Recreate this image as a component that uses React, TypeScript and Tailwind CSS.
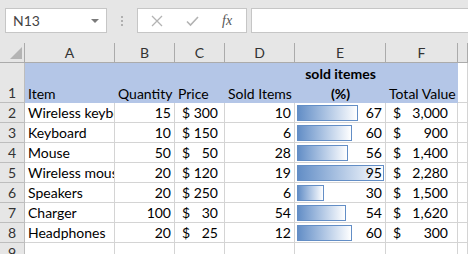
import React from 'react';

type Row = {
    item: string;
    qty: number;
    price: number;
    sold: number;
    pct: number;
    bar: number;
    total: string;
};

const rows: Row[] = [
    { item: 'Wireless keyboard', qty: 15, price: 300, sold: 10, pct: 67, bar: 61, total: '3,000' },
    { item: 'Keyboard', qty: 10, price: 150, sold: 6, pct: 60, bar: 55, total: '900' },
    { item: 'Mouse', qty: 50, price: 50, sold: 28, pct: 56, bar: 51, total: '1,400' },
    { item: 'Wireless mouse', qty: 20, price: 120, sold: 19, pct: 95, bar: 87, total: '2,280' },
    { item: 'Speakers', qty: 20, price: 250, sold: 6, pct: 30, bar: 27, total: '1,500' },
    { item: 'Charger', qty: 100, price: 30, sold: 54, pct: 54, bar: 49, total: '1,620' },
    { item: 'Headphones', qty: 20, price: 25, sold: 12, pct: 60, bar: 55, total: '300' },
];

const cols = ['A', 'B', 'C', 'D', 'E', 'F', ''];

const cell = 'h-5 border-r border-b border-[#d4d4d4] bg-white flex items-end pb-[2px] whitespace-nowrap overflow-hidden';
const rowHead = 'h-5 border-r border-b border-[#bdbdbd] bg-[#e6e6e6] flex items-end justify-center pb-[2px] text-[#333]';
const blue = 'h-10 bg-[#b4c6e7] flex items-end pb-[2px] pl-[3px] whitespace-nowrap overflow-hidden';

function FormulaBar() {
    return (
        <div className="h-[43px] bg-[#e6e6e6] flex items-start pt-2 text-[14px]">
            <div className="ml-[5px] w-[102px] h-[25px] border border-[#c6c6c6] bg-white flex items-center justify-between pl-[7px] pr-[7px] text-[#444]">
                <span>N13</span>
                <span className="w-0 h-0 border-l-[4px] border-r-[4px] border-t-[4px] border-l-transparent border-r-transparent border-t-[#7a7a7a]" />
            </div>
            <div className="w-[30px] h-[25px] flex flex-col items-center justify-center gap-[2px]">
                <span className="w-[2px] h-[2px] bg-[#b0b0b0]" />
                <span className="w-[2px] h-[2px] bg-[#b0b0b0]" />
                <span className="w-[2px] h-[2px] bg-[#b0b0b0]" />
            </div>
            <div className="w-[110px] h-[25px] border border-[#c6c6c6] bg-white flex items-center">
                <svg className="ml-[13px]" width="12" height="12" viewBox="0 0 12 12">
                    <path d="M1 1 L11 11 M11 1 L1 11" stroke="#b3b3b3" strokeWidth="1.3" fill="none" />
                </svg>
                <svg className="ml-[23px]" width="13" height="12" viewBox="0 0 13 12">
                    <path d="M1 6.5 L4.5 10 L12 2" stroke="#b3b3b3" strokeWidth="1.6" fill="none" />
                </svg>
                <span className="ml-[23px] italic text-[#555] text-[14px] font-['Liberation_Serif',serif]">fx</span>
            </div>
            <div className="ml-[4px] flex-1 h-[25px] border border-[#c6c6c6] border-r-0 bg-white" />
        </div>
    );
}

export default function App() {
    return (
        <div className="w-[468px] h-[254px] overflow-hidden bg-white font-['Lato',sans-serif] text-[14px] text-black leading-none">
            <FormulaBar />
            <div className="grid grid-cols-[25px_90px_60px_50px_70px_91px_72px_1fr]">
                {/* column headers */}
                <div className="h-5 bg-[#e6e6e6] border-r border-b border-[#ababab] relative">
                    <svg className="absolute right-[2px] bottom-[3px]" width="12" height="12" viewBox="0 0 12 12">
                        <path d="M12 0 L12 12 L0 12 Z" fill="#b4b4b4" />
                    </svg>
                </div>
                {cols.map((c, i) => (
                    <div key={i} className="h-5 bg-[#e6e6e6] border-r border-b border-[#ababab] flex items-center justify-center text-[#333]">
                        {c}
                    </div>
                ))}

                {/* row 1 */}
                <div className="h-10 border-r border-b border-[#bdbdbd] bg-[#e6e6e6] flex items-end justify-center pb-[2px] text-[#333]">1</div>
                <div className={blue}>Item</div>
                <div className={blue}>Quantity</div>
                <div className={blue}>Price</div>
                <div className={blue}>Sold Items</div>
                <div className="h-10 bg-[#b4c6e7] flex flex-col items-center justify-end pb-[2px] gap-[6px] font-bold whitespace-nowrap">
                    <span>sold itemes</span>
                    <span>(%)</span>
                </div>
                <div className={blue}>Total Value</div>
                <div className="h-10 border-r border-b border-[#d4d4d4] bg-white" />

                {rows.map((r, i) => (
                    <React.Fragment key={r.item}>
                        <div className={rowHead}>{i + 2}</div>
                        <div className={`${cell} pl-[3px]`}>{r.item}</div>
                        <div className={`${cell} justify-end pr-[3px]`}>{r.qty}</div>
                        <div className={`${cell} justify-between pl-[7px] pr-[6px]`}>
                            <span>$</span>
                            <span>{r.price}</span>
                        </div>
                        <div className={`${cell} justify-end pr-[3px]`}>{r.sold}</div>
                        <div className={`${cell} justify-end pr-[3px] relative`}>
                            <span
                                className="absolute left-[2px] top-[2px] h-4 border border-[#638ec6] bg-linear-to-r from-[#638ec6] to-white"
                                style={{ width: r.bar }}
                            />
                            <span className="relative">{r.pct}</span>
                        </div>
                        <div className={`${cell} justify-between pl-[7px] pr-[9px]`}>
                            <span>$</span>
                            <span>{r.total}</span>
                        </div>
                        <div className={cell} />
                    </React.Fragment>
                ))}

                <div className={rowHead}>9</div>
                <div className={cell} />
                <div className={cell} />
                <div className={cell} />
                <div className={cell} />
                <div className={cell} />
                <div className={cell} />
                <div className={cell} />
            </div>
        </div>
    );
}
